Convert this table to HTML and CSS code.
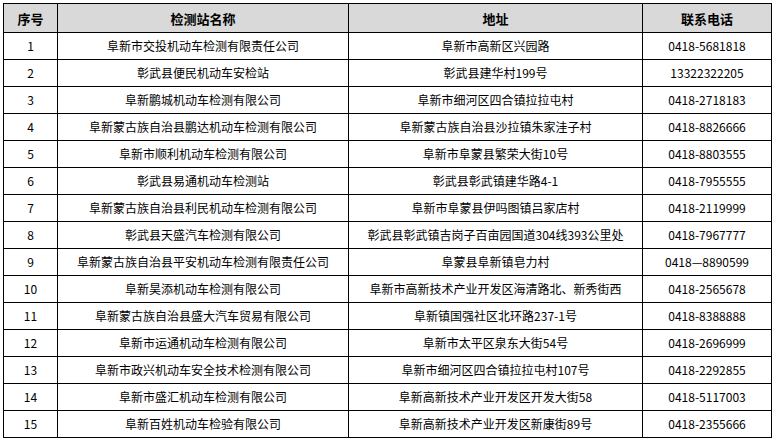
FILE: index.html
```html
<!DOCTYPE html>
<html lang="zh-CN">
<head>
<meta charset="utf-8">
<title>检测站列表</title>
<link rel="stylesheet" href="styles.css">
</head>
<body>
<table class="list">
  <colgroup>
    <col class="c-no">
    <col class="c-name">
    <col class="c-addr">
    <col class="c-tel">
  </colgroup>
  <thead>
    <tr><th>序号</th><th>检测站名称</th><th>地址</th><th>联系电话</th></tr>
  </thead>
  <tbody>
    <tr><td>1</td><td>阜新市交投机动车检测有限责任公司</td><td>阜新市高新区兴园路</td><td>0418-5681818</td></tr>
    <tr><td>2</td><td>彰武县便民机动车安检站</td><td>彰武县建华村199号</td><td>13322322205</td></tr>
    <tr><td>3</td><td>阜新鹏城机动车检测有限公司</td><td>阜新市细河区四合镇拉拉屯村</td><td>0418-2718183</td></tr>
    <tr><td>4</td><td>阜新蒙古族自治县鹏达机动车检测有限公司</td><td>阜新蒙古族自治县沙拉镇朱家洼子村</td><td>0418-8826666</td></tr>
    <tr><td>5</td><td>阜新市顺利机动车检测有限公司</td><td>阜新市阜蒙县繁荣大街10号</td><td>0418-8803555</td></tr>
    <tr><td>6</td><td>彰武县易通机动车检测站</td><td>彰武县彰武镇建华路4-1</td><td>0418-7955555</td></tr>
    <tr><td>7</td><td>阜新蒙古族自治县利民机动车检测有限公司</td><td>阜新市阜蒙县伊吗图镇吕家店村</td><td>0418-2119999</td></tr>
    <tr><td>8</td><td>彰武县天盛汽车检测有限公司</td><td>彰武县彰武镇吉岗子百亩园国道304线393公里处</td><td>0418-7967777</td></tr>
    <tr><td>9</td><td>阜新蒙古族自治县平安机动车检测有限责任公司</td><td>阜蒙县阜新镇皂力村</td><td>0418—8890599</td></tr>
    <tr><td>10</td><td>阜新昊添机动车检测有限公司</td><td>阜新市高新技术产业开发区海清路北、新秀街西</td><td>0418-2565678</td></tr>
    <tr><td>11</td><td>阜新蒙古族自治县盛大汽车贸易有限公司</td><td>阜新镇国强社区北环路237-1号</td><td>0418-8388888</td></tr>
    <tr><td>12</td><td>阜新市运通机动车检测有限公司</td><td>阜新市太平区泉东大街54号</td><td>0418-2696999</td></tr>
    <tr><td>13</td><td>阜新市政兴机动车安全技术检测有限公司</td><td>阜新市细河区四合镇拉拉屯村107号</td><td>0418-2292855</td></tr>
    <tr><td>14</td><td>阜新市盛汇机动车检测有限公司</td><td>阜新高新技术产业开发区开发大街58</td><td>0418-5117003</td></tr>
    <tr><td>15</td><td>阜新百姓机动车检验有限公司</td><td>阜新高新技术产业开发区新康街89号</td><td>0418-2355666</td></tr>
  </tbody>
</table>
</body>
</html>
```
FILE: styles.css
```css
html, body {
  margin: 0;
  padding: 0;
  background: #ffffff;
}
body {
  padding: 3px;
  font-family: "Noto Sans CJK SC", "Noto Sans", sans-serif;
  font-size: 12px;
  color: #000000;
}
.list {
  border-collapse: collapse;
  table-layout: fixed;
  width: 768px;
}
.c-no { width: 54px; }
.c-name { width: 291px; }
.c-addr { width: 294px; }
.c-tel { width: 129px; }
.list th,
.list td {
  border: 1px solid #000000;
  padding: 0;
  text-align: center;
  white-space: nowrap;
  overflow: hidden;
}
.list th {
  height: 28px;
  background: #d9d9d9;
  font-size: 13px;
  font-weight: bold;
}
.list td {
  height: 26px;
  line-height: 14px;
}
```
